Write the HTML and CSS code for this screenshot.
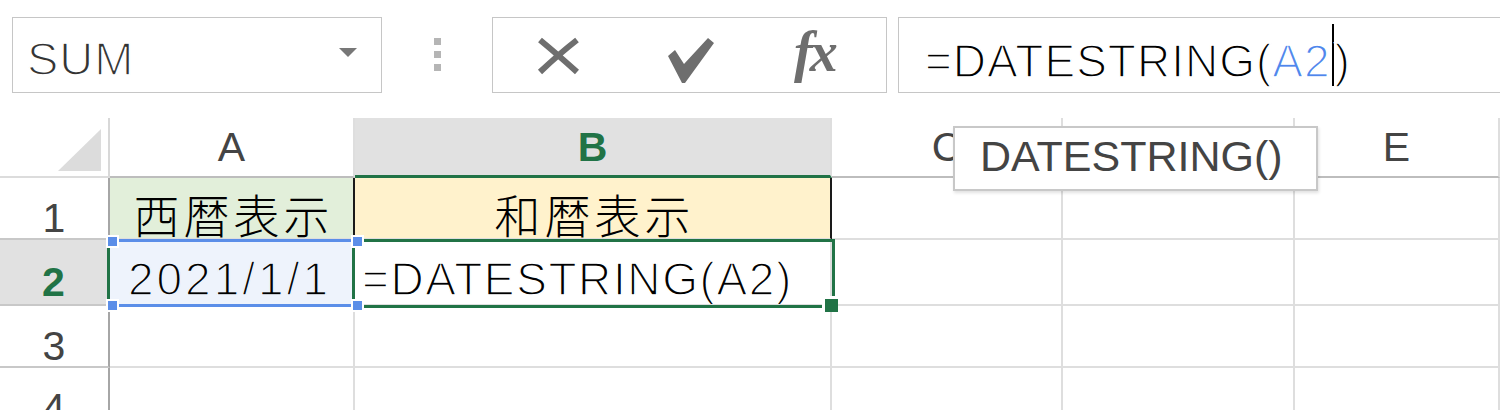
FILE: index.html
```html
<!DOCTYPE html>
<html lang="ja">
<head>
<meta charset="utf-8">
<title>DATESTRING</title>
<link rel="stylesheet" href="styles.css">
</head>
<body>
<div class="app">
  <div class="toolbar">
    <div class="namebox">
      <span class="nb-text">SUM</span>
      <span class="nb-arrow"></span>
    </div>
    <div class="grip"><i></i><i></i><i></i></div>
    <div class="fbtns">
      <span class="fbtn btn-x">
        <svg width="43" height="38" viewBox="0 0 43 38"><path d="M3 3 Q20 17 40 35 M40 3 Q22 17 3 35" fill="none" stroke="#6e6e6e" stroke-width="6"/></svg>
      </span>
      <span class="fbtn btn-ok">
        <svg width="46" height="46" viewBox="0 0 46 46"><polygon points="0,19 7,13 16,27 40,1 46,6 17,46 14,46" fill="#6e6e6e"/></svg>
      </span>
      <span class="fbtn btn-fx">fx</span>
    </div>
    <div class="fbar"><span>=DATESTRING(</span><span class="ref">A2</span><span class="caret"></span><span>)</span></div>
  </div>

  <div class="sheet">
    <div class="cell corner"><div class="tri"></div></div>
    <div class="cell ch">A</div>
    <div class="cell ch ch-sel">B</div>
    <div class="cell ch">C</div>
    <div class="cell ch">D</div>
    <div class="cell ch">E</div>

    <div class="cell rh">1</div>
    <div class="cell c jp a1">西暦表示</div>
    <div class="cell c jp b1">和暦表示</div>
    <div class="cell c"></div>
    <div class="cell c"></div>
    <div class="cell c"></div>

    <div class="cell rh rh-sel">2</div>
    <div class="cell c a2">2021/1/1</div>
    <div class="cell c b2">=DATESTRING(A2)</div>
    <div class="cell c"></div>
    <div class="cell c"></div>
    <div class="cell c"></div>

    <div class="cell rh">3</div>
    <div class="cell c"></div>
    <div class="cell c"></div>
    <div class="cell c"></div>
    <div class="cell c"></div>
    <div class="cell c"></div>

    <div class="cell rh">4</div>
    <div class="cell c"></div>
    <div class="cell c"></div>
    <div class="cell c"></div>
    <div class="cell c"></div>
    <div class="cell c"></div>

    <div class="active"><span class="fill-handle"></span></div>
    <div class="refbox">
      <span class="h h-tl"></span><span class="h h-tr"></span>
      <span class="h h-bl"></span><span class="h h-br"></span>
    </div>
    <div class="tooltip">DATESTRING()</div>
  </div>
</div>
</body>
</html>
```
FILE: styles.css
```css
html, body {
  margin: 0;
  padding: 0;
  background: #ffffff;
}
body {
  width: 1500px;
  height: 410px;
  overflow: hidden;
  font-family: "Liberation Sans", "Noto Sans CJK JP", sans-serif;
}

.toolbar {
  display: flex;
  align-items: flex-start;
  height: 118px;
  box-sizing: border-box;
  padding: 17px 0 0 12px;
}

.namebox {
  flex: 0 0 370px;
  height: 76px;
  box-sizing: border-box;
  border: 1px solid #c6c6c6;
  display: flex;
  align-items: flex-start;
  padding: 17px 24px 0 14px;
}
.nb-text {
  font-size: 47px;
  line-height: 47px;
  color: #333333;
  letter-spacing: 1px;
  -webkit-text-stroke: 1.5px #ffffff;
}
.nb-arrow {
  margin-left: auto;
  margin-top: 13px;
  width: 0;
  height: 0;
  border-left: 9px solid transparent;
  border-right: 9px solid transparent;
  border-top: 9px solid #777777;
}

.grip {
  flex: 0 0 110px;
  display: flex;
  flex-direction: column;
  align-items: center;
  gap: 6px;
  padding-top: 21px;
}
.grip i {
  display: block;
  width: 7px;
  height: 7px;
  background: #b5b5b5;
}

.fbtns {
  flex: 0 0 395px;
  height: 76px;
  box-sizing: border-box;
  border: 1px solid #c6c6c6;
  display: flex;
  align-items: flex-start;
}
.fbtn { display: block; }
.fbtn svg { display: block; }
.btn-x { margin: 19px 0 0 44px; }
.btn-ok { margin: 19px 0 0 88px; }
.btn-fx {
  margin: 4px 0 0 80px;
  font-family: "Liberation Serif", serif;
  font-style: italic;
  font-weight: bold;
  font-size: 56px;
  line-height: 60px;
  color: #6e6e6e;
  letter-spacing: -3px;
}

.fbar {
  flex: 0 0 620px;
  margin-left: 11px;
  height: 76px;
  box-sizing: border-box;
  border: 1px solid #c6c6c6;
  border-right: none;
  padding: 20px 0 0 26px;
  font-size: 46px;
  line-height: 46px;
  color: #000000;
  white-space: nowrap;
  letter-spacing: 1px;
  -webkit-text-stroke: 1.5px #ffffff;
}
.fbar .ref { color: #4f86ec; }
.caret {
  display: inline-block;
  width: 2px;
  height: 62px;
  background: #000000;
  vertical-align: -9px;
  margin: -20px 1px 0 1px;
}

.sheet {
  position: relative;
  display: grid;
  grid-template-columns: 110px 245px 477px 231px 232px 205px;
  grid-template-rows: 60px 62px 66px 62px 62px;
}
.cell {
  box-sizing: border-box;
  border-right: 2px solid #dedede;
  border-bottom: 2px solid #dedede;
  display: flex;
  overflow: hidden;
  white-space: nowrap;
}

.corner {
  justify-content: flex-end;
  align-items: flex-end;
  padding: 0 7px 5px 0;
  border-right-color: #d8d8d8;
  border-bottom-color: #dcdcdc;
}
.tri {
  width: 43px;
  height: 42px;
  background: #dcdcdc;
  clip-path: polygon(100% 0, 100% 100%, 0 100%);
}

.ch {
  justify-content: center;
  align-items: center;
  font-size: 41px;
  line-height: 42px;
  color: #444444;
  border-bottom-color: #bdbdbd;
}
.ch-sel {
  background: #e1e1e1;
  color: #217346;
  font-weight: bold;
  border-bottom: 3px solid #217346;
}

.rh {
  justify-content: center;
  align-items: flex-end;
  font-size: 41px;
  line-height: 40px;
  color: #444444;
  border-right-color: #a6a6a6;
  border-bottom-color: #c8c8c8;
}
.rh-sel {
  background: #e1e1e1;
  color: #217346;
  font-weight: bold;
  border-right: 3px solid #217346;
  padding-bottom: 2px;
}

.c {
  align-items: flex-end;
  font-size: 46px;
  line-height: 46px;
  color: #000000;
  padding-bottom: 2px;
}
.jp {
  justify-content: center;
  font-family: "Noto Sans CJK JP", sans-serif;
  font-weight: 300;
  letter-spacing: 4px;
  padding-left: 4px;
  overflow: visible;
}
.a1 {
  background: #e2efda;
  border-right-color: #1a1a1a;
}
.b1 {
  background: #fff2cc;
  border-right-color: #1a1a1a;
}
.a2 {
  background: #eef3fc;
  justify-content: flex-end;
  padding-right: 22px;
  letter-spacing: 3px;
  -webkit-text-stroke: 1.5px #eef3fc;
}
.b2 {
  padding-left: 7px;
  letter-spacing: 1.6px;
  -webkit-text-stroke: 1.5px #ffffff;
}

.active {
  position: absolute;
  left: 352px;
  top: 121px;
  width: 483px;
  height: 69px;
  box-sizing: border-box;
  border: 3px solid #217346;
}
.fill-handle {
  position: absolute;
  right: -6px;
  bottom: -7px;
  width: 13px;
  height: 13px;
  background: #217346;
  border-left: 3px solid #ffffff;
  border-top: 3px solid #ffffff;
}

.refbox {
  position: absolute;
  left: 113px;
  top: 121px;
  width: 240px;
  height: 68px;
  box-sizing: border-box;
  border-top: 3px solid #5b8ee8;
  border-bottom: 3px solid #5b8ee8;
}
.h {
  position: absolute;
  width: 9px;
  height: 9px;
  background: #5b8ee8;
  border: 2px solid #ffffff;
}
.h-tl { left: -7px; top: -7px; }
.h-tr { right: -11px; top: -7px; }
.h-bl { left: -7px; bottom: -8px; }
.h-br { right: -11px; bottom: -8px; }

.tooltip {
  position: absolute;
  left: 953px;
  top: 8px;
  width: 365px;
  height: 65px;
  box-sizing: border-box;
  border: 2px solid #c8c8c8;
  background: #ffffff;
  box-shadow: 1px 2px 3px rgba(0, 0, 0, 0.12);
  padding: 7px 0 0 25px;
  font-size: 43px;
  line-height: 43px;
  color: #444444;
}
```
